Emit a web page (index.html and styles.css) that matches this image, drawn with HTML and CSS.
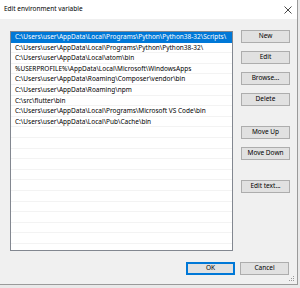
FILE: index.html
```html
<!DOCTYPE html>
<html lang="en">
<head>
  <meta charset="UTF-8" />
  <title>Edit environment variable</title>
  <link rel="stylesheet" href="styles.css">
</head>
<body>
  <div class="window">
    <div class="titlebar">
      <span class="title">Edit environment variable</span>
      <svg class="close" width="8" height="8" viewBox="0 0 8 8">
        <path d="M0.5 0.5 L7.5 7.5 M7.5 0.5 L0.5 7.5" stroke="#333" stroke-width="0.9" fill="none"/>
      </svg>
    </div>

    <div class="content">
      <div class="main">
        <div class="list">
          <div class="row selected">C:\Users\user\AppData\Local\Programs\Python\Python38-32\Scripts\</div>
          <div class="row">C:\Users\user\AppData\Local\Programs\Python\Python38-32\</div>
          <div class="row">C:\Users\user\AppData\Local\atom\bin</div>
          <div class="row">%USERPROFILE%\AppData\Local\Microsoft\WindowsApps</div>
          <div class="row">C:\Users\user\AppData\Roaming\Composer\vendor\bin</div>
          <div class="row">C:\Users\user\AppData\Roaming\npm</div>
          <div class="row">C:\src\flutter\bin</div>
          <div class="row">C:\Users\user\AppData\Local\Programs\Microsoft VS Code\bin</div>
          <div class="row">C:\Users\user\AppData\Local\Pub\Cache\bin</div>
          <div class="row"></div>
          <div class="row"></div>
          <div class="row"></div>
          <div class="row"></div>
          <div class="row"></div>
          <div class="row"></div>
          <div class="row"></div>
          <div class="row"></div>
          <div class="row"></div>
          <div class="row"></div>
          <div class="row"></div>
          <div class="row"></div>
        </div>

        <div class="actions">
          <div class="group">
            <button>New</button>
            <button>Edit</button>
            <button>Browse...</button>
            <button>Delete</button>
          </div>
          <div class="group">
            <button>Move Up</button>
            <button>Move Down</button>
          </div>
          <div class="group">
            <button>Edit text...</button>
          </div>
        </div>
      </div>

      <div class="footer">
        <button class="default">OK</button>
        <button>Cancel</button>
      </div>
    </div>

    <svg class="grip" width="6" height="6" viewBox="0 0 6 6">
      <rect x="4" y="0" width="1" height="1" fill="#999"/>
      <rect x="2" y="2" width="1" height="1" fill="#999"/>
      <rect x="4" y="2" width="1" height="1" fill="#999"/>
      <rect x="0" y="4" width="1" height="1" fill="#999"/>
      <rect x="2" y="4" width="1" height="1" fill="#999"/>
      <rect x="4" y="4" width="1" height="1" fill="#999"/>
    </svg>
  </div>
</body>
</html>
```

FILE: styles.css
```css
* { box-sizing: border-box; }
body {
  margin: 0;
  background-color: #e9e9e9;
  font-family: 'Noto Sans', 'Open Sans', sans-serif;
  font-size: 6.5px;
  color: #000;
}
.window {
  position: relative;
  width: 298px;
  height: 285px;
  background-color: #f0f0f0;
  border-right: 1px solid #9a9a9a;
  border-bottom: 1px solid #9a9a9a;
  display: flex;
  flex-direction: column;
}
.titlebar {
  height: 19px;
  background-color: #ffffff;
  display: flex;
  align-items: center;
  justify-content: space-between;
  padding: 0 5px 0 4px;
}
.title {
  line-height: 1;
}
.content {
  padding: 12px 7px 0 10px;
}
.main {
  display: flex;
  gap: 8px;
}
.list {
  width: 223px;
  height: 220px;
  background-color: #ffffff;
  border: 1px solid #828790;
  overflow: hidden;
}
.row {
  height: 10.6px;
  line-height: 10.6px;
  padding-left: 4px;
  white-space: nowrap;
  border-bottom: 1px solid #f3f3f3;
}
.row.selected {
  background-color: #0078d7;
  color: #ffffff;
  border-bottom-color: #0078d7;
}
.actions {
  display: flex;
  flex-direction: column;
  gap: 20px;
  margin-top: -1px;
}
.group {
  display: flex;
  flex-direction: column;
  gap: 8px;
}
button {
  width: 49px;
  height: 13px;
  padding: 0;
  background-color: #e1e1e1;
  border: 1px solid #adadad;
  border-radius: 0;
  font-family: inherit;
  font-size: 6.5px;
  color: #000;
  line-height: 1;
}
.footer {
  display: flex;
  justify-content: flex-end;
  gap: 5px;
  margin-top: 11px;
  padding-right: 1px;
}
.footer .default {
  border: 1px solid #0078d7;
  box-shadow: inset 0 0 0 1px #0078d7;
}
.grip {
  position: absolute;
  right: 2px;
  bottom: 2px;
}
```
